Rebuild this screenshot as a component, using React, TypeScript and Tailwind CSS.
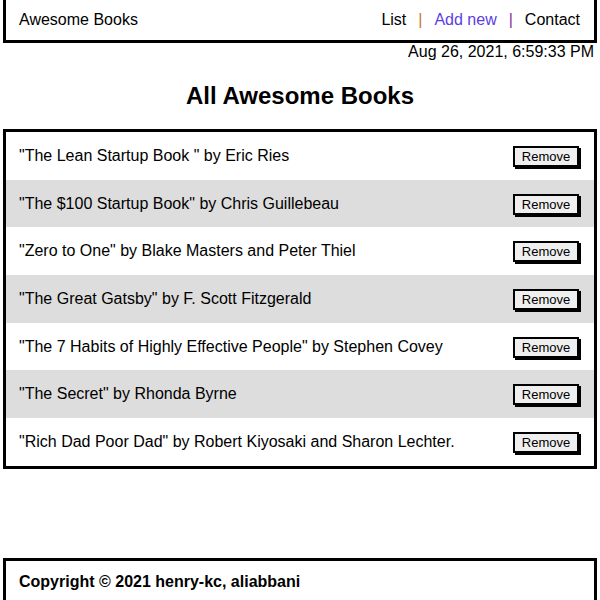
const books = [
  { title: "The Lean Startup Book ", author: "Eric Ries" },
  { title: "The $100 Startup Book", author: "Chris Guillebeau" },
  { title: "Zero to One", author: "Blake Masters and Peter Thiel" },
  { title: "The Great Gatsby", author: "F. Scott Fitzgerald" },
  { title: "The 7 Habits of Highly Effective People", author: "Stephen Covey" },
  { title: "The Secret", author: "Rhonda Byrne" },
  { title: "Rich Dad Poor Dad", author: "Robert Kiyosaki and Sharon Lechter." },
];

export default function App() {
  return (
    <div className="min-h-[600px] bg-white text-black font-['Liberation_Sans',Arial,sans-serif]">
      <header className="mx-[3px] h-[43px] flex items-center justify-between border-x-[3px] border-b-[3px] border-black px-3 text-base">
        <span className="pl-[1px]">Awesome Books</span>
        <nav className="flex items-center gap-3 pr-[2px]">
          <a className="text-black">List</a>
          <span className="text-[#c0772e]">|</span>
          <a className="text-[#5b3fe0]">Add new</a>
          <span className="text-[#8b2f9a]">|</span>
          <a className="text-black">Contact</a>
        </nav>
      </header>

      <p className="h-[18px] pr-[6px] text-right text-base leading-[18px]">
        Aug 26, 2021, 6:59:33 PM
      </p>

      <h1 className="mt-[21px] text-center text-2xl font-bold leading-[28px]">
        All Awesome Books
      </h1>

      <ul className="mx-[3px] mt-[19px] border-[3px] border-black">
        {books.map((b, i) => (
          <li
            key={b.title}
            className={`flex h-[47.7px] items-center justify-between pl-3 pr-[12px] text-base ${
              i % 2 === 1 ? "bg-[#dddddd]" : "bg-white"
            }`}
          >
            <span className="pl-[1px]">
              "{b.title}" by {b.author}
            </span>
            <button className="mt-[1px] mr-[3px] h-[21px] w-[66px] border-2 border-black bg-[#efefef] text-[13px] leading-none shadow-[2px_2px_0_#000]">
              Remove
            </button>
          </li>
        ))}
      </ul>

      <footer className="mx-[3px] mt-[89px] h-[50px] border-x-[3px] border-t-[3px] border-black px-3 pt-[9px] text-base font-bold">
        <span className="pl-[1px]">Copyright © 2021 henry-kc, aliabbani</span>
      </footer>
    </div>
  );
}
